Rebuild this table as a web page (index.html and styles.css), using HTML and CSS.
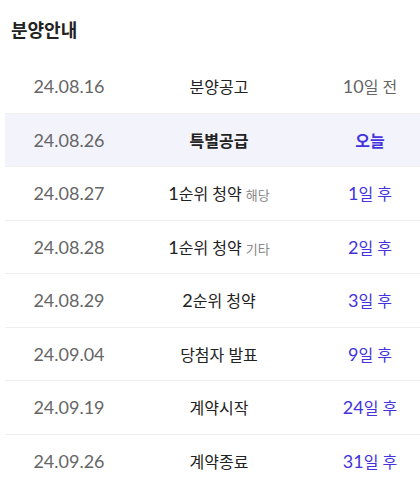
FILE: index.html
```html
<!doctype html>
<html>
  <head>
    <meta charset="utf-8">
    <title>분양안내</title>
    <link rel="stylesheet" href="styles.css">
  </head>
  <body>
    <div class="section">
      <h2 class="title">분양안내</h2>
      <div class="sched">
        <div class="row">
          <div class="date">24.08.16</div>
          <div class="name">분양공고</div>
          <div class="dday past"><span class="num">10</span>일 전</div>
        </div>
        <div class="row today">
          <div class="date">24.08.26</div>
          <div class="name">특별공급</div>
          <div class="dday">오늘</div>
        </div>
        <div class="row">
          <div class="date">24.08.27</div>
          <div class="name"><span class="num">1</span>순위 청약 <span class="sub">해당</span></div>
          <div class="dday"><span class="num">1</span>일 후</div>
        </div>
        <div class="row">
          <div class="date">24.08.28</div>
          <div class="name"><span class="num">1</span>순위 청약 <span class="sub">기타</span></div>
          <div class="dday"><span class="num">2</span>일 후</div>
        </div>
        <div class="row">
          <div class="date">24.08.29</div>
          <div class="name"><span class="num">2</span>순위 청약</div>
          <div class="dday"><span class="num">3</span>일 후</div>
        </div>
        <div class="row">
          <div class="date">24.09.04</div>
          <div class="name">당첨자 발표</div>
          <div class="dday"><span class="num">9</span>일 후</div>
        </div>
        <div class="row">
          <div class="date">24.09.19</div>
          <div class="name">계약시작</div>
          <div class="dday"><span class="num">24</span>일 후</div>
        </div>
        <div class="row">
          <div class="date">24.09.26</div>
          <div class="name">계약종료</div>
          <div class="dday"><span class="num">31</span>일 후</div>
        </div>
      </div>
    </div>
  </body>
</html>
```

FILE: styles.css
```css
html,
body {
  margin: 0;
  padding: 0;
  background: #fff;
  overflow: hidden;
}
body {
  font-family: Lato, "Noto Sans CJK KR", sans-serif;
  color: #222;
}
.section {
  padding: 0 0 0 5px;
}
.title {
  margin: 0;
  padding: 17px 0 0 6px;
  height: 43px;
  font-size: 18px;
  font-weight: bold;
  line-height: 26px;
  color: #222;
}
.sched {
  width: 415px;
  overflow: hidden;
}
.row {
  display: grid;
  grid-template-columns: 128px 172px 130px;
  align-items: center;
  height: 52.5px;
  border-bottom: 1px solid #eeeeee;
  font-size: 16px;
}
.row:last-child {
  border-bottom: none;
}
.row.today {
  background: #f3f3fb;
  font-weight: bold;
}
.date {
  text-align: center;
  font-size: 18px;
  color: #666;
}
.row.today .date {
  font-weight: normal;
}
.name {
  text-align: center;
  color: #222;
}
.num {
  font-size: 18px;
  line-height: 1;
}
.sub {
  font-size: 13px;
  color: #888;
}
.dday {
  text-align: center;
  color: #4433dd;
}
.dday.past {
  color: #666;
}
```
